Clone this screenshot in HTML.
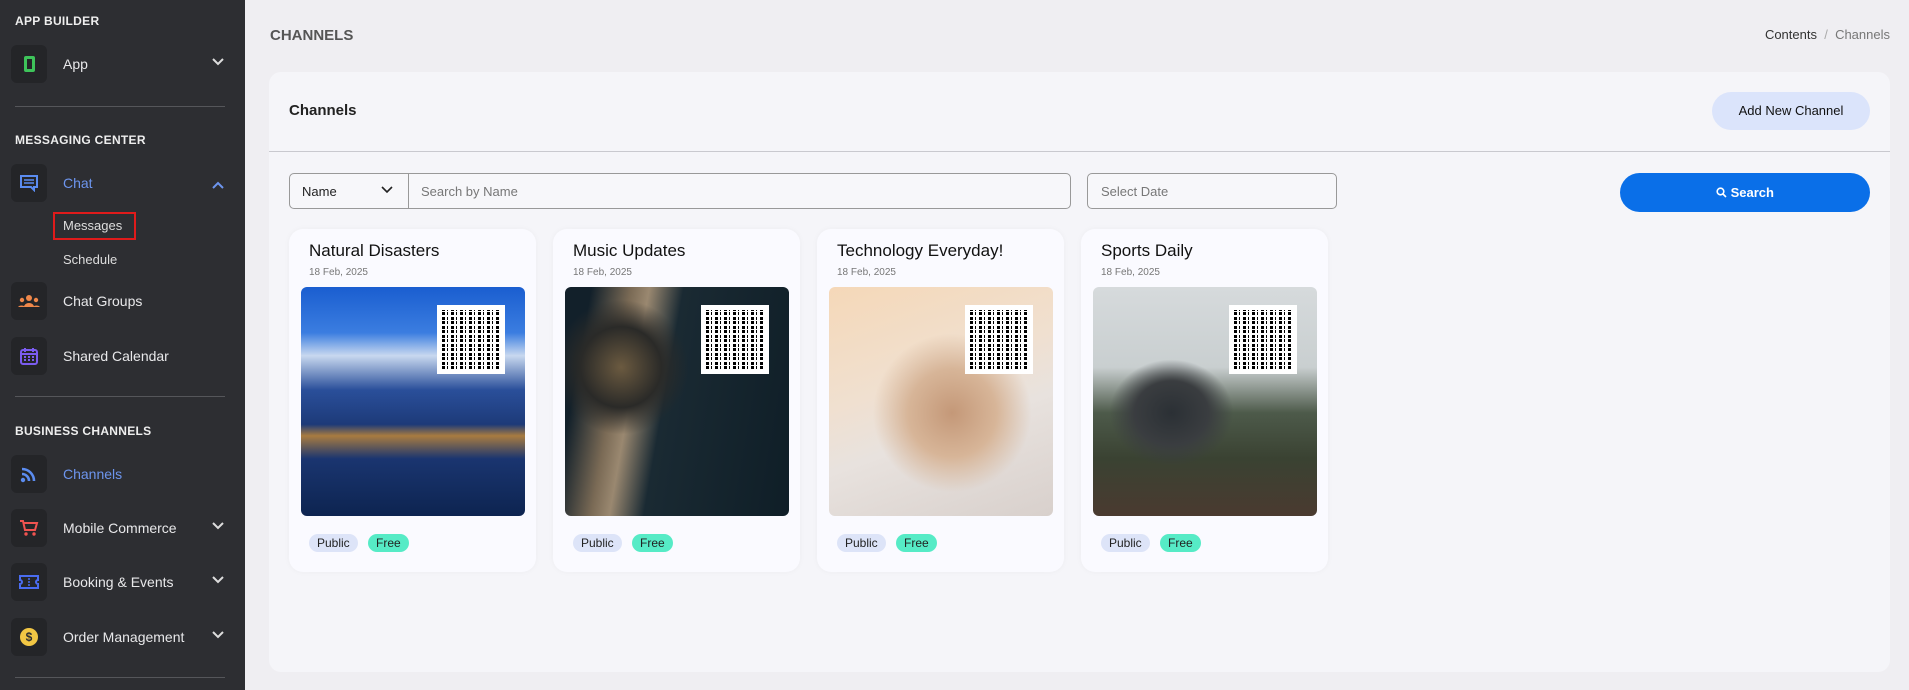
<!DOCTYPE html>
<html><head><meta charset="utf-8"><style>
*{box-sizing:border-box;margin:0;padding:0}
body{width:1909px;height:690px;overflow:hidden;background:#efeef2;font-family:"Liberation Sans",sans-serif;position:relative}
.sb{position:absolute;left:0;top:0;width:245px;height:690px;background:#2d2e32;color:#e6e6e8}
.sec{position:absolute;left:15px;font-size:12px;font-weight:bold;letter-spacing:.3px;color:#eee}
.it{position:absolute;left:11px;width:225px;height:38px}
.ic{position:absolute;left:0;top:0;width:36px;height:38px;background:#242528;border-radius:6px;display:flex;align-items:center;justify-content:center}
.lb{position:absolute;left:52px;top:11px;font-size:14px;color:#e8e8ea}
.ch{position:absolute;left:200px;top:12px}
.dv{position:absolute;left:15px;width:210px;height:1px;background:#55565a}
.sub{position:absolute;left:63px;font-size:13px;color:#ddd}
.panel{position:absolute;left:269px;top:72px;width:1621px;height:600px;background:#f5f5f9;border-radius:12px}
.card{position:absolute;top:229px;width:247px;height:343px;background:#fafaff;border-radius:14px;box-shadow:0 0 6px rgba(0,0,0,.04)}
.card h3{position:absolute;left:20px;top:12px;font-size:17px;font-weight:normal;color:#111}
.card .d{position:absolute;left:20px;top:38px;font-size:10px;color:#777}
.img{position:absolute;left:12px;top:58px;width:224px;height:229px;border-radius:6px;overflow:hidden}
.qr{position:absolute;right:20px;top:18px;width:68px;height:69px;background:#fff;padding:5px}
.qr div{width:100%;height:100%;background:repeating-linear-gradient(90deg,#000 0 3px,#fff 3px 5px,#000 5px 6px,#fff 6px 9px);-webkit-mask:repeating-linear-gradient(0deg,#000 0 3px,transparent 3px 4px,#000 4px 7px,transparent 7px 9px)}
.bd{position:absolute;top:305px;height:18px;border-radius:9px;font-size:12px;line-height:18px;padding:0 8px;color:#222}
</style></head><body>
<div class="sb">
<div class="sec" style="top:14px">APP BUILDER</div>
<div class="it" style="top:45px"><div class="ic"><div style="width:11px;height:16px;border:3px solid #3ec45a;border-radius:2px"></div></div><div class="lb">App</div><svg class="ch" width="14" height="10" viewBox="0 0 14 10"><path d="M2 2l5 5 5-5" stroke="#ddd" stroke-width="2" fill="none"/></svg></div>
<div class="dv" style="top:106px"></div>
<div class="sec" style="top:133px">MESSAGING CENTER</div>
<div class="it" style="top:164px"><div class="ic"><svg width="20" height="18" viewBox="0 0 20 18"><path d="M2 2h16v11h-3v3l-3-3H2z" fill="none" stroke="#5b8cf0" stroke-width="2"/><path d="M5 6h10M5 9h10" stroke="#5b8cf0" stroke-width="1.5"/></svg></div><div class="lb" style="color:#6d95ee">Chat</div><svg class="ch" style="top:16px" width="14" height="10" viewBox="0 0 14 10"><path d="M2 8l5-5 5 5" stroke="#6d95ee" stroke-width="2" fill="none"/></svg></div>
<div style="position:absolute;left:53px;top:212px;width:83px;height:28px;border:2px solid #e01b1b"></div>
<div class="sub" style="top:218px">Messages</div>
<div class="sub" style="top:252px">Schedule</div>
<div class="it" style="top:282px"><div class="ic"><svg width="22" height="14" viewBox="0 0 22 14"><circle cx="11" cy="4" r="3" fill="#f0884a"/><circle cx="4" cy="6" r="2.2" fill="#f0884a"/><circle cx="18" cy="6" r="2.2" fill="#f0884a"/><path d="M6 13a5 4 0 0110 0zM0 13a4 3 0 017 0zM15 13a4 3 0 017 0z" fill="#f0884a"/></svg></div><div class="lb">Chat Groups</div></div>
<div class="it" style="top:337px"><div class="ic"><svg width="18" height="18" viewBox="0 0 18 18"><rect x="1" y="3" width="16" height="14" rx="2" fill="none" stroke="#7b5cf0" stroke-width="2"/><path d="M1 7h16M5 1v4M13 1v4" stroke="#7b5cf0" stroke-width="2"/><path d="M4 10h2M8 10h2M12 10h2M4 13h2M8 13h2M12 13h2" stroke="#7b5cf0" stroke-width="2"/></svg></div><div class="lb">Shared Calendar</div></div>
<div class="dv" style="top:396px"></div>
<div class="sec" style="top:424px">BUSINESS CHANNELS</div>
<div class="it" style="top:455px"><div class="ic"><svg width="18" height="18" viewBox="0 0 18 18"><circle cx="3" cy="15" r="2.2" fill="#5b8cf0"/><path d="M2 9a7 7 0 017 7M2 4a12 12 0 0112 12" stroke="#5b8cf0" stroke-width="2.6" fill="none"/></svg></div><div class="lb" style="color:#6d95ee">Channels</div></div>
<div class="it" style="top:509px"><div class="ic"><svg width="20" height="18" viewBox="0 0 20 18"><path d="M1 2h3l2 9h10l2-7H5" fill="none" stroke="#ef5350" stroke-width="2"/><circle cx="7" cy="15" r="1.7" fill="#ef5350"/><circle cx="15" cy="15" r="1.7" fill="#ef5350"/></svg></div><div class="lb">Mobile Commerce</div><svg class="ch" width="14" height="10" viewBox="0 0 14 10"><path d="M2 2l5 5 5-5" stroke="#ddd" stroke-width="2" fill="none"/></svg></div>
<div class="it" style="top:563px"><div class="ic"><svg width="20" height="16" viewBox="0 0 20 16"><path d="M1 2h18v4a2 2 0 000 4v4H1v-4a2 2 0 000-4z" fill="none" stroke="#4a6cf0" stroke-width="2"/><path d="M10 4v2M10 7v2M10 10v2" stroke="#4a6cf0" stroke-width="1.5"/></svg></div><div class="lb">Booking &amp; Events</div><svg class="ch" width="14" height="10" viewBox="0 0 14 10"><path d="M2 2l5 5 5-5" stroke="#ddd" stroke-width="2" fill="none"/></svg></div>
<div class="it" style="top:618px"><div class="ic"><div style="width:18px;height:18px;border-radius:50%;background:#f2c744;color:#2d2e32;font-size:12px;font-weight:bold;text-align:center;line-height:18px">$</div></div><div class="lb">Order Management</div><svg class="ch" width="14" height="10" viewBox="0 0 14 10"><path d="M2 2l5 5 5-5" stroke="#ddd" stroke-width="2" fill="none"/></svg></div>
<div class="dv" style="top:677px"></div>
</div>

<div style="position:absolute;left:270px;top:27px;font-size:15px;font-weight:bold;color:#555">CHANNELS</div>
<div style="position:absolute;right:19px;top:27px;font-size:13px;color:#333">Contents <span style="color:#aaa">&nbsp;/&nbsp;</span> <span style="color:#777">Channels</span></div>

<div class="panel"></div>
<div style="position:absolute;left:289px;top:102px;font-size:15px;font-weight:bold;color:#222">Channels</div>
<div style="position:absolute;left:1712px;top:92px;width:158px;height:38px;background:#dbe4fb;border-radius:19px;font-size:13px;text-align:center;line-height:38px;color:#111">Add New Channel</div>
<div style="position:absolute;left:269px;top:151px;width:1621px;height:1px;background:#c9c9cf"></div>

<div style="position:absolute;left:289px;top:173px;width:782px;height:36px;border:1px solid #999;border-radius:5px;background:#f7f7fa"></div>
<div style="position:absolute;left:408px;top:173px;width:1px;height:36px;background:#999"></div>
<div style="position:absolute;left:302px;top:184px;font-size:13px;color:#222">Name</div>
<svg style="position:absolute;left:381px;top:186px" width="12" height="8" viewBox="0 0 12 8"><path d="M1 1l5 5 5-5" stroke="#222" stroke-width="1.6" fill="none"/></svg>
<div style="position:absolute;left:421px;top:184px;font-size:13px;color:#777">Search by Name</div>
<div style="position:absolute;left:1087px;top:173px;width:250px;height:36px;border:1px solid #999;border-radius:5px;background:#f7f7fa"></div>
<div style="position:absolute;left:1101px;top:184px;font-size:13px;color:#777">Select Date</div>
<div style="position:absolute;left:1620px;top:173px;width:250px;height:39px;background:#0a6fe8;border-radius:20px;color:#fff;font-size:13px;font-weight:bold;text-align:center;line-height:39px"><svg width="11" height="11" viewBox="0 0 11 11" style="vertical-align:-1px"><circle cx="4.5" cy="4.5" r="3.3" stroke="#fff" stroke-width="1.6" fill="none"/><path d="M7 7l3 3" stroke="#fff" stroke-width="1.6"/></svg> Search</div>

<div class="card" style="left:289px"><h3>Natural Disasters</h3><div class="d">18 Feb, 2025</div>
<div class="img" style="background:linear-gradient(180deg,#1a5ed0 0%,#3b7de0 20%,#c8d8ef 30%,#2a4f9a 45%,#1d3a78 60%,#a87b40 65%,#1a3570 75%,#0d2450 100%)"><div class="qr"><div></div></div></div>
<div class="bd" style="left:20px;background:#dde4f8">Public</div><div class="bd" style="left:79px;background:#56ebc6">Free</div></div>

<div class="card" style="left:553px"><h3>Music Updates</h3><div class="d">18 Feb, 2025</div>
<div class="img" style="background:radial-gradient(circle at 25% 35%,#6b5a40 0,#2a2a28 18%,transparent 30%),linear-gradient(100deg,#12202a 10%,#7a6a55 25%,#9a8870 32%,#1a2a33 45%,#0f1e27 100%)"><div class="qr"><div></div></div></div>
<div class="bd" style="left:20px;background:#dde4f8">Public</div><div class="bd" style="left:79px;background:#56ebc6">Free</div></div>

<div class="card" style="left:817px"><h3>Technology Everyday!</h3><div class="d">18 Feb, 2025</div>
<div class="img" style="background:radial-gradient(circle at 55% 55%,#c49878 0,#d7b598 25%,transparent 45%),linear-gradient(160deg,#f5d8b8 0%,#f0e0d0 40%,#e8e2de 60%,#d8d0cc 100%)"><div class="qr"><div></div></div></div>
<div class="bd" style="left:20px;background:#dde4f8">Public</div><div class="bd" style="left:79px;background:#56ebc6">Free</div></div>

<div class="card" style="left:1081px"><h3>Sports Daily</h3><div class="d">18 Feb, 2025</div>
<div class="img" style="background:radial-gradient(ellipse at 35% 55%,#2b3035 0,#3a3d40 18%,transparent 30%),linear-gradient(180deg,#d6dadc 0%,#c9cfd0 35%,#4d5a4a 55%,#3a4232 75%,#4a3a30 100%)"><div class="qr"><div></div></div></div>
<div class="bd" style="left:20px;background:#dde4f8">Public</div><div class="bd" style="left:79px;background:#56ebc6">Free</div></div>
</body></html>
